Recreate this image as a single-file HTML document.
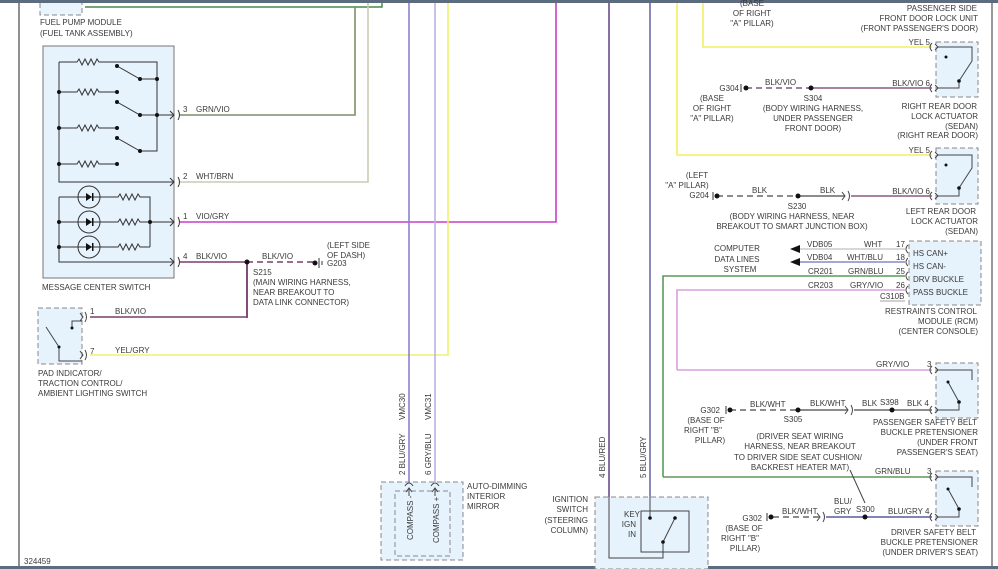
<!DOCTYPE html>
<html><head><meta charset="utf-8"><style>
html,body{margin:0;padding:0;background:#fff;}
svg{display:block;}
text{font-family:"Liberation Sans",sans-serif;font-size:8px;fill:#3a3a3a;}
.r{text-anchor:end}.c{text-anchor:middle}
</style></head><body>
<svg width="998" height="569" viewBox="0 0 998 569" xmlns="http://www.w3.org/2000/svg">
<rect x="0" y="0" width="998" height="3" fill="#5b6c7e"/>
<rect x="0" y="566" width="998" height="3" fill="#5b6c7e"/>
<line x1="19" y1="3" x2="19" y2="566" stroke="#222" stroke-width="1"/>
<line x1="992" y1="3" x2="992" y2="566" stroke="#333" stroke-width="1"/>

<!-- fuel pump -->
<path d="M40,3 V15 H82 V3" fill="#eaf4fc" stroke="#888" stroke-dasharray="5,3"/>
<path d="M85,7 H382 V3" fill="none" stroke="#4a8a4a" stroke-width="1.5"/>
<text x="40" y="25">FUEL PUMP MODULE</text>
<text x="40" y="36">(FUEL TANK ASSEMBLY)</text>

<!-- wires from message center -->
<g fill="none" stroke-width="1.6">
<path d="M180,115 H355 V7" stroke="#7a9068"/>
<path d="M180,182 H368 V3" stroke="#c9ccb4"/>
<path d="M180,222 H556 V3" stroke="#c83ec8"/>
<path d="M180,262 H247" stroke="#7a3c70"/>
<path d="M247,262 H313" stroke="#7a3c70" stroke-dasharray="6,4"/>
<path d="M247,262 V317 H90" stroke="#7a3c70"/>
<path d="M90,355 H448 V3" stroke="#f0f070"/>
<path d="M409,3 V482" stroke="#8a80d0"/>
<path d="M435,3 V482" stroke="#bab2e2"/>
<path d="M609,3 V497" stroke="#6a4c8c"/>
<path d="M650,3 V497" stroke="#6a6aa8"/>
<path d="M703,3 V47 H932" stroke="#f2f060"/>
<path d="M677,3 V155 H932" stroke="#f2f060"/>
<path d="M663,477 V276 H905" stroke="#5a9a5a"/>
<path d="M677,370 V290 H905" stroke="#d8a0dc"/>
<path d="M800,249 H905" stroke="#ccc"/>
<path d="M800,262 H905" stroke="#8888c8"/>
<path d="M932,370 H677" stroke="#d8a0dc"/>
<path d="M932,477 H663" stroke="#5a9a5a"/>
</g>
<line x1="247" y1="262" x2="247" y2="318" stroke="#7a3c70" stroke-width="1.6"/>
<circle cx="247" cy="262" r="2.5" fill="#111"/>
<circle cx="315" cy="263" r="2.5" fill="#111"/>
<path d="M319,258 V268 M322,261 V265" stroke="#333"/>

<!-- message center switch -->
<rect x="43" y="46" width="131" height="232" fill="#e6f2fc" stroke="#777"/>
<g fill="none" stroke="#333" stroke-width="1">
<path d="M59,62 H77 l2,-3 3,6 3,-6 3,6 3,-6 3,6 3,-6 2,3 H157 V151 H140"/>
<path d="M117,66 L140,79 H157"/>
<path d="M59,92 H77 l2,-3 3,6 3,-6 3,6 3,-6 3,6 3,-6 2,3 H117"/>
<path d="M117,102 L140,115 H174"/>
<path d="M59,128 H77 l2,-3 3,6 3,-6 3,6 3,-6 3,6 3,-6 2,3 H117"/>
<path d="M117,138 L140,151"/>
<path d="M59,164 H77 l2,-3 3,6 3,-6 3,6 3,-6 3,6 3,-6 2,3 H117"/>
<path d="M59,62 V182 H174"/>
<path d="M59,197 H118 l2,-3 3,6 3,-6 3,6 3,-6 3,6 3,-6 2,3 H150 V247"/>
<path d="M59,222 H118 l2,-3 3,6 3,-6 3,6 3,-6 3,6 3,-6 2,3 H174"/>
<path d="M59,247 H118 l2,-3 3,6 3,-6 3,6 3,-6 3,6 3,-6 2,3 H150"/>
<path d="M59,197 V262 H174"/>
<circle cx="89" cy="197" r="11"/><circle cx="89" cy="222" r="11"/><circle cx="89" cy="247" r="11"/>
<path d="M170,111 L174,115 L170,119 M178,110 Q181,115 178,120"/>
<path d="M170,178 L174,182 L170,186 M178,177 Q181,182 178,187"/>
<path d="M170,218 L174,222 L170,226 M178,217 Q181,222 178,227"/>
<path d="M170,258 L174,262 L170,266 M178,257 Q181,262 178,267"/>
</g>
<g fill="#111">
<circle cx="117" cy="66" r="2"/><circle cx="140" cy="79" r="2"/><circle cx="157" cy="79" r="2"/>
<circle cx="59" cy="92" r="2"/><circle cx="117" cy="92" r="2"/><circle cx="117" cy="102" r="2"/><circle cx="140" cy="115" r="2"/><circle cx="157" cy="115" r="2"/>
<circle cx="59" cy="128" r="2"/><circle cx="117" cy="128" r="2"/><circle cx="117" cy="138" r="2"/><circle cx="140" cy="151" r="2"/>
<circle cx="59" cy="164" r="2"/><circle cx="117" cy="164" r="2"/>
<circle cx="59" cy="222" r="2"/><circle cx="150" cy="222" r="2"/><circle cx="59" cy="247" r="2"/>
<path d="M86,193 L92,197 L86,201Z M86,218 L92,222 L86,226Z M86,243 L92,247 L86,251Z"/>
<rect x="92" y="193" width="1.5" height="8"/><rect x="92" y="218" width="1.5" height="8"/><rect x="92" y="243" width="1.5" height="8"/>
</g>
<text x="42" y="290">MESSAGE CENTER SWITCH</text>
<text x="183" y="112">3</text><text x="196" y="112">GRN/VIO</text>
<text x="183" y="179">2</text><text x="196" y="179">WHT/BRN</text>
<text x="183" y="219">1</text><text x="196" y="219">VIO/GRY</text>
<text x="183" y="259">4</text><text x="196" y="259">BLK/VIO</text>
<text x="262" y="259">BLK/VIO</text>
<text x="327" y="248">(LEFT SIDE</text><text x="327" y="258">OF DASH)</text><text x="327" y="266">G203</text>
<text x="253" y="275">S215</text><text x="253" y="285">(MAIN WIRING HARNESS,</text><text x="253" y="295">NEAR BREAKOUT TO</text><text x="253" y="305">DATA LINK CONNECTOR)</text>

<!-- PAD switch -->
<rect x="38" y="308" width="44" height="56" fill="#e6f2fc" stroke="#888" stroke-dasharray="5,3"/>
<g fill="none" stroke="#444">
<path d="M46,327 L59,347 V361 H82 M72,328 V321 H82"/>
<path d="M80,313 L83,317 L80,321 M85,312 Q88,317 85,322 M80,351 L83,355 L80,359 M85,350 Q88,355 85,360"/>
</g>
<circle cx="72" cy="328" r="1.5" fill="#111"/><circle cx="59" cy="347" r="1.5" fill="#111"/>
<text x="90" y="314">1</text><text x="115" y="314">BLK/VIO</text>
<text x="90" y="354">7</text><text x="115" y="353">YEL/GRY</text>
<text x="38" y="376">PAD INDICATOR/</text><text x="38" y="386">TRACTION CONTROL/</text><text x="38" y="396">AMBIENT LIGHTING SWITCH</text>

<!-- mirror -->
<rect x="381" y="482" width="82" height="78" fill="#e6f2fc" stroke="#888" stroke-dasharray="5,3"/>
<rect x="395" y="491" width="55" height="65" fill="none" stroke="#888" stroke-dasharray="5,3"/>
<path d="M405,486 Q409,480 413,486 M431,486 Q435,480 439,486 M406,492 L409,488 L412,492 M432,492 L435,488 L438,492" fill="none" stroke="#444"/>
<line x1="409" y1="488" x2="409" y2="496" stroke="#444"/><line x1="435" y1="488" x2="435" y2="496" stroke="#444"/>
<text transform="translate(413,540) rotate(-90)">COMPASS -</text>
<text transform="translate(439,543) rotate(-90)">COMPASS +</text>
<text transform="translate(405,420) rotate(-90)">VMC30</text>
<text transform="translate(431,420) rotate(-90)">VMC31</text>
<text transform="translate(405,475) rotate(-90)">2  BLU/GRY</text>
<text transform="translate(431,475) rotate(-90)">6  GRY/BLU</text>
<text x="467" y="489">AUTO-DIMMING</text><text x="467" y="499">INTERIOR</text><text x="467" y="509">MIRROR</text>

<!-- ignition -->
<rect x="595" y="497" width="113" height="72" fill="#e6f2fc" stroke="#888" stroke-dasharray="5,3"/>
<rect x="641" y="511" width="48" height="41" fill="none" stroke="#444"/>
<path d="M609,497 V558 H663 V542 L675,518 M650,497 V518" fill="none" stroke="#444"/>
<circle cx="650" cy="518" r="1.8" fill="#111"/><circle cx="675" cy="518" r="1.8" fill="#111"/><circle cx="663" cy="542" r="1.8" fill="#111"/>
<text transform="translate(605,478) rotate(-90)">4  BLU/RED</text>
<text transform="translate(646,478) rotate(-90)">5  BLU/GRY</text>
<text class="r" x="588" y="502">IGNITION</text><text class="r" x="588" y="512">SWITCH</text><text class="r" x="588" y="523">(STEERING</text><text class="r" x="588" y="533">COLUMN)</text>
<text class="r" x="640" y="517">KEY</text><text class="r" x="636" y="527">IGN</text><text class="r" x="636" y="537">IN</text>

<!-- right top labels -->
<text class="c" x="752" y="6">(BASE</text><text class="c" x="752" y="16">OF RIGHT</text><text class="c" x="752" y="26">"A" PILLAR)</text>
<text class="r" x="977" y="11">PASSENGER SIDE</text><text class="r" x="978" y="21">FRONT DOOR LOCK UNIT</text><text class="r" x="978" y="31">(FRONT PASSENGER'S DOOR)</text>

<!-- door actuators -->
<g>
<rect x="936" y="42" width="42" height="55" fill="#e6f2fc" stroke="#888" stroke-dasharray="5,3"/>
<path d="M937,47 H972 V61 L959,81 V88 H937" fill="none" stroke="#444"/>
<rect x="936" y="148" width="42" height="56" fill="#e6f2fc" stroke="#888" stroke-dasharray="5,3"/>
<path d="M937,155 H972 V168 L959,188 V196 H937" fill="none" stroke="#444"/>
<rect x="936" y="363" width="42" height="55" fill="#e6f2fc" stroke="#888" stroke-dasharray="5,3"/>
<path d="M937,370 H972 V380 M948,382 L959,402 V410 H937" fill="none" stroke="#444"/>
<rect x="936" y="471" width="42" height="55" fill="#e6f2fc" stroke="#888" stroke-dasharray="5,3"/>
<path d="M937,477 H972 V487 M948,489 L959,509 V517 H937" fill="none" stroke="#444"/>
<g fill="#111"><circle cx="946" cy="57" r="1.5"/><circle cx="959" cy="81" r="1.8"/><circle cx="946" cy="165" r="1.5"/><circle cx="959" cy="188" r="1.8"/><circle cx="959" cy="402" r="1.8"/><circle cx="959" cy="509" r="1.8"/><circle cx="948" cy="382" r="1.5"/><circle cx="948" cy="489" r="1.5"/></g>
</g>
<g fill="none" stroke="#444">
<path d="M932,43 Q928,47 932,51 M935,44 L938,47 L935,50"/>
<path d="M932,84 Q928,88 932,92 M935,85 L938,88 L935,91"/>
<path d="M932,151 Q928,155 932,159 M935,152 L938,155 L935,158"/>
<path d="M932,192 Q928,196 932,200 M935,193 L938,196 L935,199"/>
<path d="M932,366 Q928,370 932,374 M935,367 L938,370 L935,373"/>
<path d="M932,406 Q928,410 932,414 M935,407 L938,410 L935,413"/>
<path d="M932,473 Q928,477 932,481 M935,474 L938,477 L935,480"/>
<path d="M932,513 Q928,517 932,521 M935,514 L938,517 L935,520"/>
</g>
<text class="r" x="930" y="45">YEL 5</text>
<text class="r" x="930" y="86">BLK/VIO 6</text>
<text class="r" x="930" y="153">YEL 5</text>
<text class="r" x="930" y="194">BLK/VIO 6</text>

<!-- G304 -->
<g fill="none" stroke-width="1.6">
<path d="M746,88 H811" stroke="#7a5a7a" stroke-dasharray="6,4"/>
<path d="M811,88 H932" stroke="#8a5a80"/>
<path d="M717,196 H798" stroke="#666" stroke-dasharray="6,4"/>
<path d="M798,196 H845" stroke="#666"/>
<path d="M851,196 H932" stroke="#8a5a80"/>
<path d="M730,410 H798" stroke="#666" stroke-dasharray="6,4"/>
<path d="M798,410 H848 M854,410 H932" stroke="#666"/>
<path d="M773,517 H820" stroke="#666" stroke-dasharray="6,4"/>
<path d="M826,517 H932" stroke="#5a5aa0"/>
</g>
<g fill="none" stroke="#444">
<path d="M842,192 L845,196 L842,200 M848,191 Q851,196 848,201"/>
<path d="M845,406 L848,410 L845,414 M851,405 Q854,410 851,415"/>
<path d="M817,513 L820,517 L817,521 M823,512 Q826,517 823,522"/>
<path d="M850,470 L865,503"/>
</g>
<g fill="#111">
<circle cx="746" cy="88" r="2.5"/><circle cx="811" cy="88" r="2.5"/>
<circle cx="717" cy="196" r="2.5"/><circle cx="798" cy="196" r="2.5"/>
<circle cx="730" cy="410" r="2.5"/><circle cx="798" cy="410" r="2.5"/><circle cx="892" cy="410" r="2.5"/>
<circle cx="771" cy="517" r="2.5"/><circle cx="865" cy="517" r="2.5"/>
<path d="M741,84 V92 M713,192 V200 M726,406 V414 M767,513 V521" stroke="#333"/>
</g>
<text class="r" x="739" y="91">G304</text>
<text class="c" x="712" y="101">(BASE</text><text class="c" x="712" y="111">OF RIGHT</text><text class="c" x="712" y="121">"A" PILLAR)</text>
<text x="765" y="85">BLK/VIO</text>
<text class="c" x="813" y="101">S304</text><text class="c" x="813" y="111">(BODY WIRING HARNESS,</text><text class="c" x="813" y="121">UNDER PASSENGER</text><text class="c" x="813" y="131">FRONT DOOR)</text>
<text class="r" x="977" y="109">RIGHT REAR DOOR</text><text class="r" x="978" y="119">LOCK ACTUATOR</text><text class="r" x="978" y="129">(SEDAN)</text><text class="r" x="978" y="138">(RIGHT REAR DOOR)</text>

<text class="c" x="697" y="178">(LEFT</text><text class="c" x="687" y="188">"A" PILLAR)</text><text class="r" x="709" y="198">G204</text>
<text x="752" y="193">BLK</text><text x="820" y="193">BLK</text>
<text class="c" x="797" y="209">S230</text><text class="c" x="792" y="219">(BODY WIRING HARNESS, NEAR</text><text class="c" x="792" y="229">BREAKOUT TO SMART JUNCTION BOX)</text>
<text class="r" x="976" y="214">LEFT REAR DOOR</text><text class="r" x="978" y="224">LOCK ACTUATOR</text><text class="r" x="978" y="234">(SEDAN)</text>

<!-- RCM -->
<rect x="909" y="241" width="72" height="64" fill="#e6f2fc" stroke="#888" stroke-dasharray="5,3"/>
<g fill="none" stroke="#444">
<path d="M908,245 Q904,249 908,253 M908,258 Q904,262 908,266 M908,272 Q904,276 908,280 M908,286 Q904,290 908,294"/>
</g>
<path d="M790,249 L800,245 V253Z M790,262 L800,258 V266Z" fill="#111"/>
<text x="913" y="256">HS CAN+</text><text x="913" y="269">HS CAN-</text><text x="913" y="282">DRV BUCKLE</text><text x="913" y="295">PASS BUCKLE</text>
<text class="c" x="737" y="251">COMPUTER</text><text class="c" x="737" y="262">DATA LINES</text><text class="c" x="740" y="272">SYSTEM</text>
<text x="807" y="247">VDB05</text><text x="864" y="247">WHT</text><text x="896" y="247">17</text>
<text x="807" y="260">VDB04</text><text x="847" y="260">WHT/BLU</text><text x="896" y="260">18</text>
<text x="808" y="274">CR201</text><text x="848" y="274">GRN/BLU</text><text x="896" y="274">25</text>
<text x="808" y="288">CR203</text><text x="850" y="288">GRY/VIO</text><text x="896" y="288">26</text>
<text x="880" y="299">C310B</text><line x1="880" y1="301" x2="905" y2="301" stroke="#444" stroke-width="0.6"/>
<text class="r" x="977" y="314">RESTRAINTS CONTROL</text><text class="r" x="978" y="324">MODULE (RCM)</text><text class="r" x="978" y="334">(CENTER CONSOLE)</text>

<!-- belts -->
<text x="876" y="367">GRY/VIO</text><text x="927" y="367">3</text>
<text class="r" x="720" y="413">G302</text>
<text class="c" x="706" y="423">(BASE OF</text><text class="c" x="703" y="433">RIGHT "B"</text><text class="c" x="710" y="443">PILLAR)</text>
<text x="750" y="407">BLK/WHT</text><text x="810" y="406">BLK/WHT</text><text x="862" y="406">BLK</text><text x="880" y="405">S398</text><text x="907" y="406">BLK  4</text>
<text class="c" x="793" y="422">S305</text>
<text class="c" x="800" y="439">(DRIVER SEAT WIRING</text><text class="c" x="800" y="449">HARNESS, NEAR BREAKOUT</text><text class="c" x="798" y="460">TO DRIVER SIDE SEAT CUSHION/</text><text class="c" x="800" y="470">BACKREST HEATER MAT)</text>
<text class="r" x="977" y="425">PASSENGER SAFETY BELT</text><text class="r" x="978" y="435">BUCKLE PRETENSIONER</text><text class="r" x="978" y="445">(UNDER FRONT</text><text class="r" x="978" y="455">PASSENGER'S SEAT)</text>
<text x="875" y="474">GRN/BLU</text><text x="927" y="474">3</text>
<text class="r" x="762" y="521">G302</text>
<text class="c" x="744" y="531">(BASE OF</text><text class="c" x="740" y="541">RIGHT "B"</text><text class="c" x="745" y="551">PILLAR)</text>
<text x="782" y="514">BLK/WHT</text><text x="834" y="504">BLU/</text><text x="834" y="514">GRY</text><text x="856" y="512">S300</text><text x="888" y="514">BLU/GRY  4</text>
<text class="r" x="976" y="535">DRIVER SAFETY BELT</text><text class="r" x="978" y="545">BUCKLE PRETENSIONER</text><text class="r" x="978" y="555">(UNDER DRIVER'S SEAT)</text>

<text x="24" y="564">324459</text>
</svg>
</body></html>
